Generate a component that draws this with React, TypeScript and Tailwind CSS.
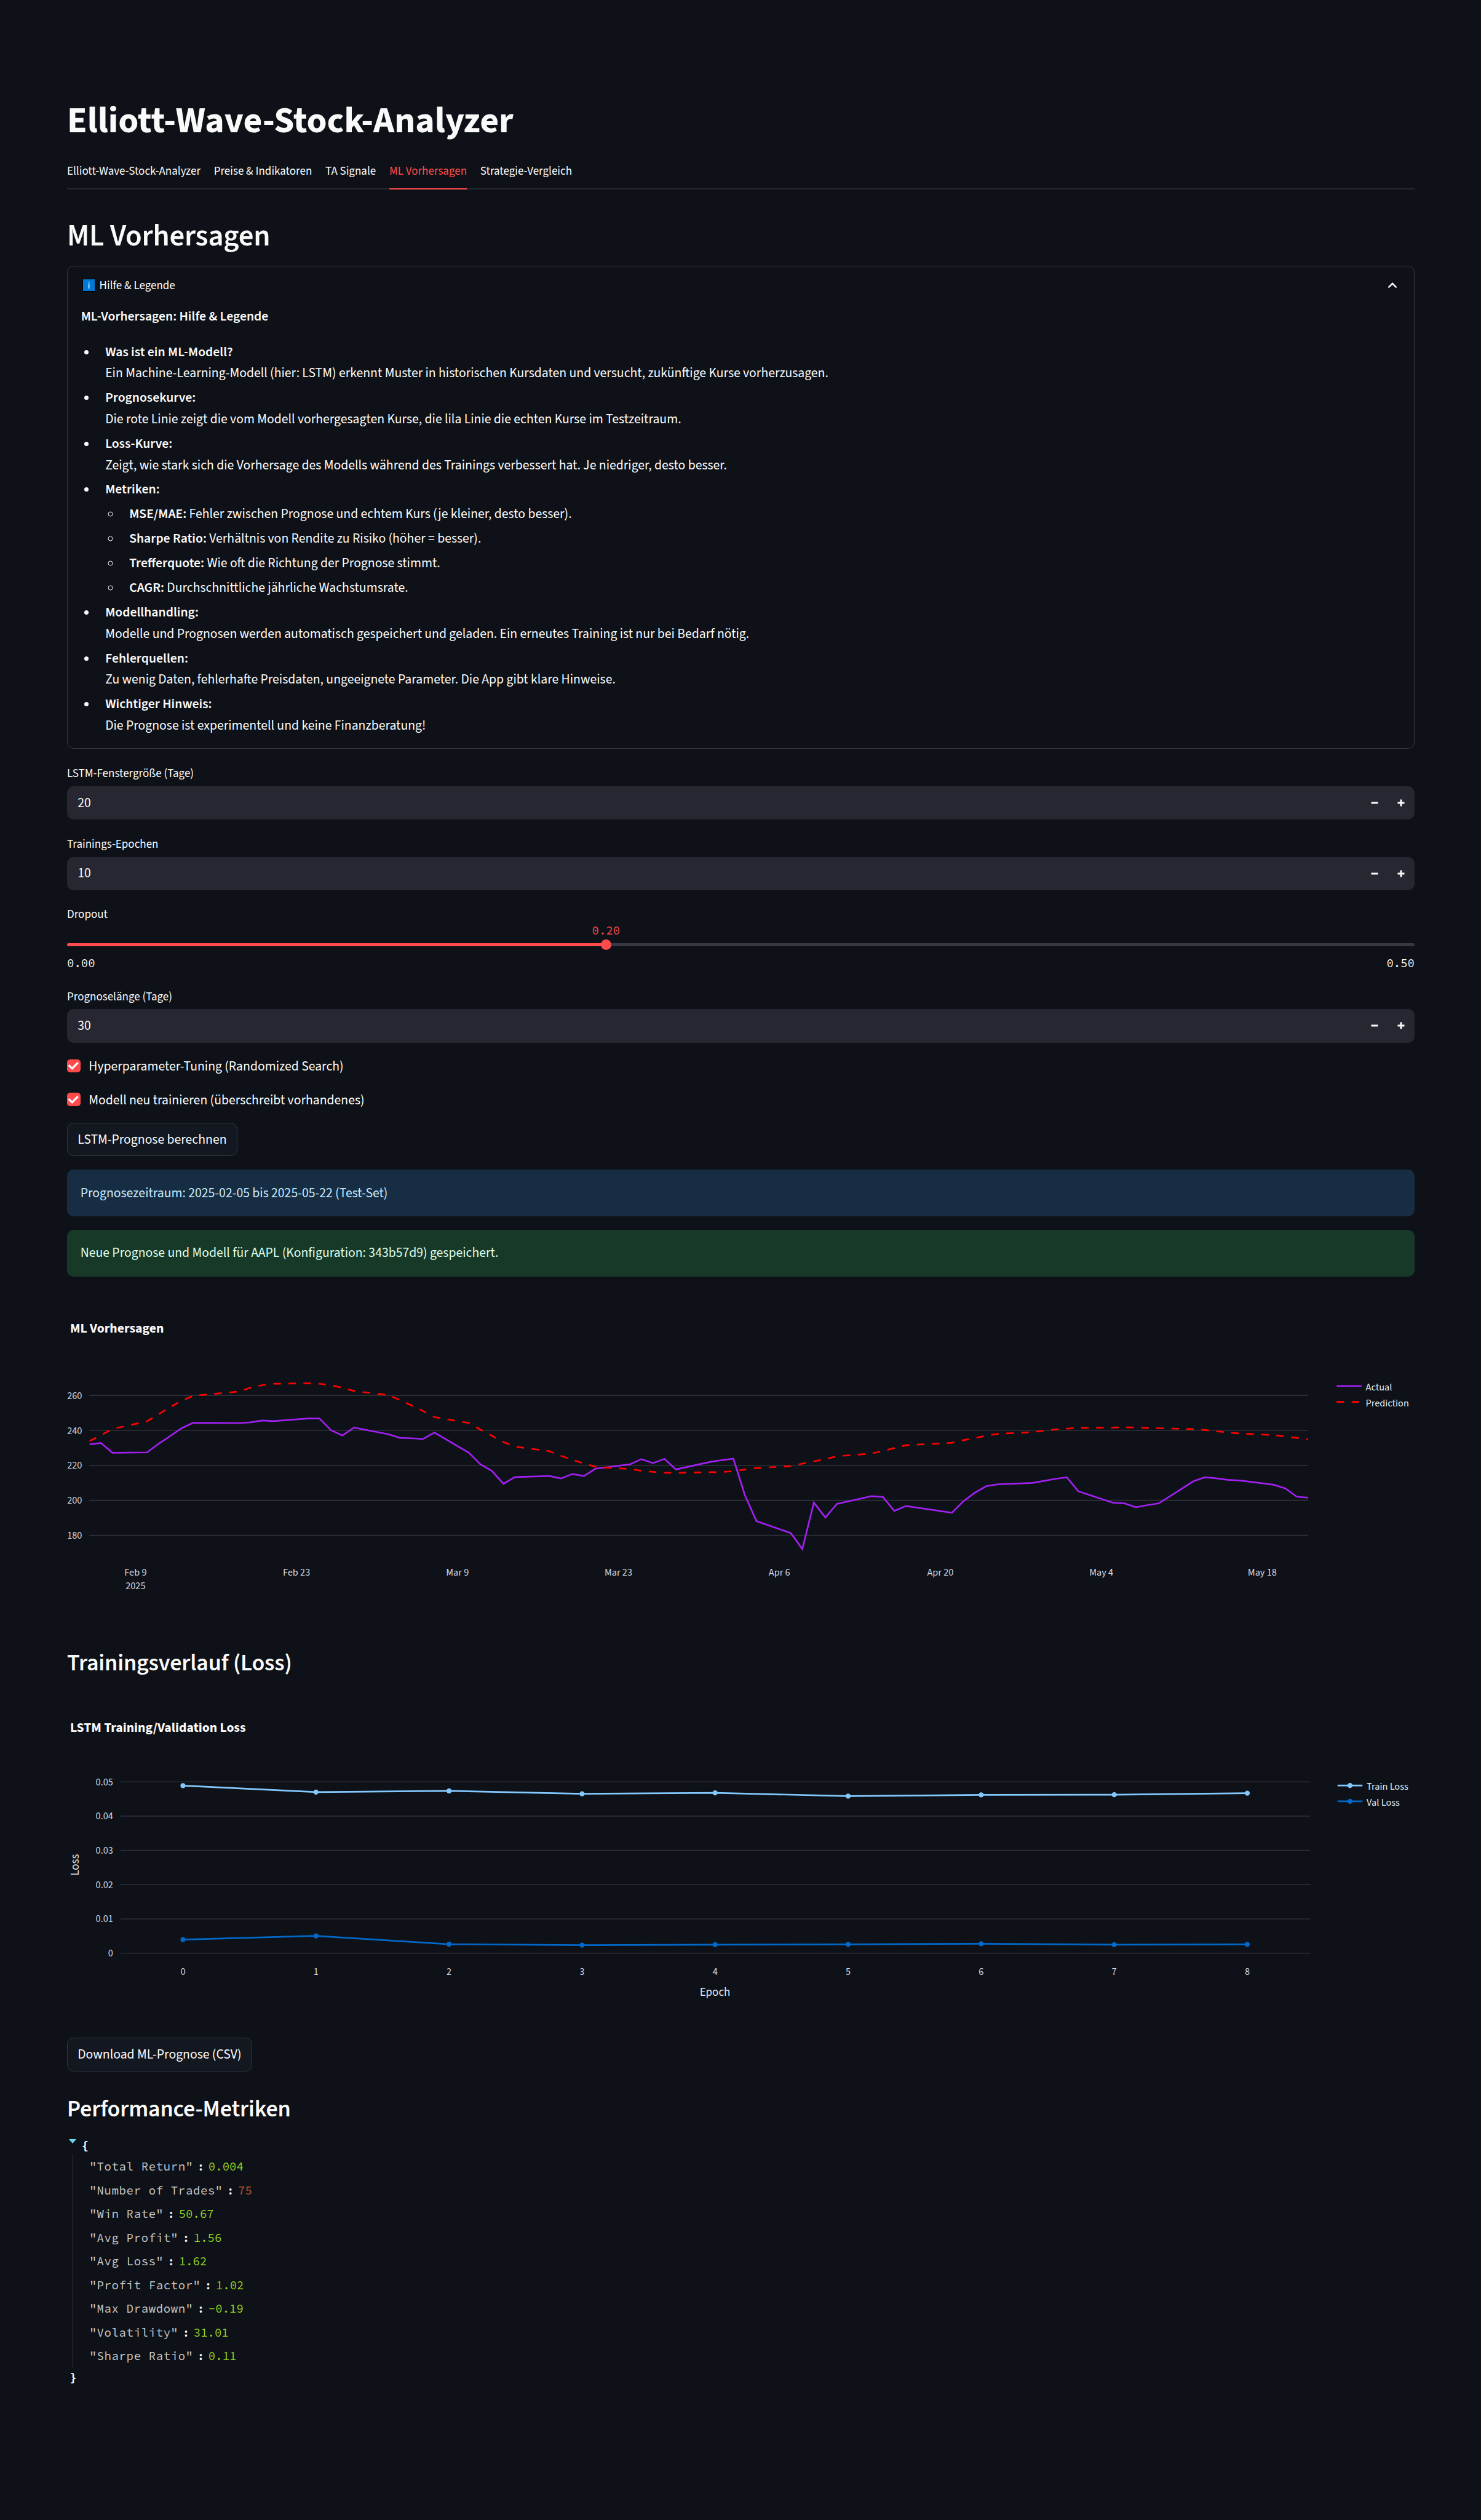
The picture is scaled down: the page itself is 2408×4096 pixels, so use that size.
import type { ReactNode } from "react";

const sans = "font-['Source_Sans_Pro','Source_Sans_3','Noto_Sans_CJK_SC',sans-serif]";
const mono = "font-['Source_Code_Pro','Liberation_Mono',monospace]";

const tabs = ["Elliott-Wave-Stock-Analyzer", "Preise & Indikatoren", "TA Signale", "ML Vorhersagen", "Strategie-Vergleich"];
const activeTab = "ML Vorhersagen";

type HelpItem = { title: string; text?: string; children?: { title: string; text: string }[] };

const help: HelpItem[] = [
  {
    title: "Was ist ein ML-Modell?",
    text: "Ein Machine-Learning-Modell (hier: LSTM) erkennt Muster in historischen Kursdaten und versucht, zukünftige Kurse vorherzusagen.",
  },
  {
    title: "Prognosekurve:",
    text: "Die rote Linie zeigt die vom Modell vorhergesagten Kurse, die lila Linie die echten Kurse im Testzeitraum.",
  },
  {
    title: "Loss-Kurve:",
    text: "Zeigt, wie stark sich die Vorhersage des Modells während des Trainings verbessert hat. Je niedriger, desto besser.",
  },
  {
    title: "Metriken:",
    children: [
      { title: "MSE/MAE:", text: "Fehler zwischen Prognose und echtem Kurs (je kleiner, desto besser)." },
      { title: "Sharpe Ratio:", text: "Verhältnis von Rendite zu Risiko (höher = besser)." },
      { title: "Trefferquote:", text: "Wie oft die Richtung der Prognose stimmt." },
      { title: "CAGR:", text: "Durchschnittliche jährliche Wachstumsrate." },
    ],
  },
  {
    title: "Modellhandling:",
    text: "Modelle und Prognosen werden automatisch gespeichert und geladen. Ein erneutes Training ist nur bei Bedarf nötig.",
  },
  {
    title: "Fehlerquellen:",
    text: "Zu wenig Daten, fehlerhafte Preisdaten, ungeeignete Parameter. Die App gibt klare Hinweise.",
  },
  { title: "Wichtiger Hinweis:", text: "Die Prognose ist experimentell und keine Finanzberatung!" },
];

// [days since Feb 5, actual close, predicted close]
const prices: [number, number, number][] = [
  [0, 232.0, 233.9], [1, 232.8, 237.3], [2, 227.2, 240.8], [5, 227.4, 245.2], [6, 232.3, 249.2], [7, 236.7, 253.2],
  [8, 241.2, 256.9], [9, 244.3, 259.7], [13, 244.2, 262.2], [14, 244.6, 264.4], [15, 245.6, 265.8], [16, 245.3, 266.6],
  [19, 246.8, 266.9], [20, 246.8, 266.6], [21, 240.1, 265.8], [22, 237.1, 264.3], [23, 241.6, 262.5], [26, 237.8, 260.2],
  [27, 235.7, 257.3], [28, 235.5, 254.3], [29, 235.1, 251.1], [30, 238.7, 247.6], [33, 227.2, 244.2], [34, 220.6, 240.4],
  [35, 216.8, 236.9], [36, 209.5, 233.4], [37, 213.3, 230.7], [40, 213.9, 228.1], [41, 212.5, 225.5], [42, 215.1, 223.2],
  [43, 213.9, 221.1], [44, 218.1, 219.2], [47, 220.6, 217.9], [48, 223.6, 216.9], [49, 221.3, 216.3], [50, 223.7, 215.8],
  [51, 217.7, 215.7], [54, 222.0, 216.1], [55, 223.0, 216.2], [56, 223.8, 216.7], [57, 203.0, 217.6], [58, 188.2, 218.5],
  [61, 181.3, 219.6], [62, 172.2, 221.0], [63, 198.7, 222.3], [64, 190.2, 223.6], [65, 198.0, 225.2], [68, 202.4, 226.8],
  [69, 202.0, 228.2], [70, 194.0, 229.9], [71, 196.8, 231.5], [75, 192.9, 232.9], [76, 199.5, 234.4], [77, 204.4, 235.6],
  [78, 208.2, 237.0], [79, 209.2, 238.0], [82, 210.0, 239.0], [83, 211.1, 239.8], [84, 212.3, 240.5], [85, 213.2, 241.0],
  [86, 205.2, 241.4], [89, 198.7, 241.6], [90, 198.3, 241.7], [91, 196.1, 241.7], [92, 197.3, 241.4], [93, 198.3, 241.2],
  [96, 210.9, 240.7], [97, 213.2, 240.2], [98, 212.6, 239.5], [99, 211.7, 238.8], [100, 211.4, 238.2], [103, 208.9, 237.3],
  [104, 206.9, 236.5], [105, 202.1, 235.7], [106, 201.5, 234.9],
];

const dayX = (d: number) => 47.9 + d * 24.47;
const priceY = (v: number) => 222.5 + (260 - v) * 3.725;
const dateTicks: [number, string][] = [
  [4, "Feb 9"], [18, "Feb 23"], [32, "Mar 9"], [46, "Mar 23"], [60, "Apr 6"], [74, "Apr 20"], [88, "May 4"], [102, "May 18"],
];

function PriceChart() {
  const line = (k: 1 | 2) => prices.map((p) => `${dayX(p[0]).toFixed(1)},${priceY(p[k]).toFixed(1)}`).join(" ");
  return (
    <svg viewBox="0 0 2868 712" className={`mt-[23px] block h-[544px] w-full ${sans}`} fontSize="21.3">
      <defs>
        <clipPath id="price-area">
          <rect x="47.5" y="120" width="2594" height="460" />
        </clipPath>
      </defs>
      <text x="6.5" y="88.7" fontSize="28.4" fontWeight="700" fill="#fafafa">ML Vorhersagen</text>
      {[260, 240, 220, 200, 180].map((v) => (
        <g key={v}>
          <line x1="47.5" x2="2641.5" y1={priceY(v)} y2={priceY(v)} stroke="#2c2e38" strokeWidth="2.4" />
          <text x="32" y={priceY(v) + 7.3} textAnchor="end" fill="#d3d7e0">{v}</text>
        </g>
      ))}
      {dateTicks.map(([d, label]) => (
        <text key={label} x={dayX(d)} y="606.6" textAnchor="middle" fill="#d3d7e0">{label}</text>
      ))}
      <text x={dayX(4)} y="634.8" textAnchor="middle" fill="#d3d7e0">2025</text>
      <g clipPath="url(#price-area)" fill="none" strokeWidth="3.55">
        <polyline points={line(1)} stroke="#a020f0" />
        <polyline points={line(2)} stroke="#ff0000" strokeDasharray="16 16" />
      </g>
      <line x1="2702" x2="2755" y1="202.5" y2="202.5" stroke="#a020f0" strokeWidth="3.55" />
      <text x="2764" y="211.5" fill="#e8eaef">Actual</text>
      <line x1="2702" x2="2755" y1="236.5" y2="236.5" stroke="#ff0000" strokeWidth="3.55" strokeDasharray="16 16" />
      <text x="2764" y="245.5" fill="#e8eaef">Prediction</text>
    </svg>
  );
}

const trainY = [203.3, 217, 214.6, 220.7, 218.7, 225.7, 223, 222.7, 219.3];
const valY = [531, 523, 540.6, 542.6, 541.6, 541, 539.7, 541.7, 541];
const lossTicks = ["0.05", "0.04", "0.03", "0.02", "0.01", "0"];
const epochX = (i: number) => 246.7 + i * 283.15;

function LossSeries({ ys, color }: { ys: number[]; color: string }) {
  return (
    <g>
      <polyline points={ys.map((y, i) => `${epochX(i)},${y}`).join(" ")} fill="none" stroke={color} strokeWidth="3.55" />
      {ys.map((y, i) => (
        <circle key={i} cx={epochX(i)} cy={y} r="5.4" fill={color} />
      ))}
    </g>
  );
}

function LossChart() {
  return (
    <svg viewBox="0 0 2868 712" className={`mt-[20.8px] block h-[544px] w-full ${sans}`} fontSize="21.3">
      <text x="6.5" y="89" fontSize="28.4" fontWeight="700" fill="#fafafa">LSTM Training/Validation Loss</text>
      {lossTicks.map((label, i) => (
        <g key={label}>
          <line x1="114" x2="2646" y1={195.2 + i * 72.95} y2={195.2 + i * 72.95} stroke="#2c2e38" strokeWidth="2" />
          <text x="98" y={202.3 + i * 72.95} textAnchor="end" fill="#d3d7e0">{label}</text>
        </g>
      ))}
      {trainY.map((_, i) => (
        <text key={i} x={epochX(i)} y="606" textAnchor="middle" fill="#d3d7e0">{i}</text>
      ))}
      <text x="1379" y="651" textAnchor="middle" fontSize="24.8" fill="#e0e3ea">Epoch</text>
      <text transform="translate(25.5 372) rotate(-90)" textAnchor="middle" fontSize="24.8" fill="#e0e3ea">Loss</text>
      <LossSeries ys={trainY} color="#83c9ff" />
      <LossSeries ys={valY} color="#0068c9" />
      <line x1="2704" x2="2757" y1="203" y2="203" stroke="#83c9ff" strokeWidth="3.55" />
      <circle cx="2730.5" cy="203" r="5.4" fill="#83c9ff" />
      <text x="2766" y="212" fill="#e8eaef">Train Loss</text>
      <line x1="2704" x2="2757" y1="236.7" y2="236.7" stroke="#0068c9" strokeWidth="3.55" />
      <circle cx="2730.5" cy="236.7" r="5.4" fill="#0068c9" />
      <text x="2766" y="246" fill="#e8eaef">Val Loss</text>
    </svg>
  );
}

function Label({ children }: { children: ReactNode }) {
  return <div className="mt-[22.4px] flex h-[33px] items-center pt-[2.5px] text-[19px] leading-[33px]">{children}</div>;
}

function NumberField({ label, value }: { label: string; value: number }) {
  return (
    <div>
      <Label>{label}</Label>
      <div className="mt-[5px] flex h-[54.3px] items-center rounded-[10.8px] bg-[#262730] pl-[17.2px] text-[21.7px]">
        <span className="flex-1 pt-[2px]">{value}</span>
        <span className="flex w-[43.6px] justify-center">
          <svg viewBox="0 0 12 12" className="size-[12px]"><path d="M0.5 6h11" stroke="#fafafa" strokeWidth="3" /></svg>
        </span>
        <span className="flex w-[43.6px] justify-center">
          <svg viewBox="0 0 12 12" className="size-[12px]"><path d="M0.5 6h11M6 0.5v11" stroke="#fafafa" strokeWidth="3" /></svg>
        </span>
      </div>
    </div>
  );
}

function Checkbox({ children }: { children: ReactNode }) {
  return (
    <div className="mt-[21.7px] flex h-[32.6px] items-center">
      <span className="flex size-[21.7px] items-center justify-center rounded-[5px] bg-[#ff4b4b]">
        <svg viewBox="0 0 17 13" className="w-[19px]">
          <path d="M6.5 12.6L.4 6.6l2.2-2.2 3.9 4L13.9.9 16 3z" fill="#fff" />
        </svg>
      </span>
      <span className="pt-[4px] pl-[13.6px] text-[21.7px] leading-[32.6px]">{children}</span>
    </div>
  );
}

function Button({ children, className }: { children: ReactNode; className: string }) {
  return (
    <button className={`flex h-[54.3px] items-center rounded-[10.8px] border border-[#34363e] bg-[#131720] px-[16.2px] pt-[2px] text-[21.7px] leading-[34.7px] ${className}`}>
      {children}
    </button>
  );
}

const metrics: [string, string, string][] = [
  ["Total Return", "0.004", "text-[#96d624]"],
  ["Number of Trades", "75", "text-[#b8592c]"],
  ["Win Rate", "50.67", "text-[#96d624]"],
  ["Avg Profit", "1.56", "text-[#96d624]"],
  ["Avg Loss", "1.62", "text-[#96d624]"],
  ["Profit Factor", "1.02", "text-[#96d624]"],
  ["Max Drawdown", "-0.19", "text-[#96d624]"],
  ["Volatility", "31.01", "text-[#96d624]"],
  ["Sharpe Ratio", "0.11", "text-[#96d624]"],
];

function JsonView() {
  return (
    <div className={`mt-[20.5px] text-[19px] ${mono}`}>
      <div className="flex h-[29px] items-start pl-[2.5px]">
        <svg viewBox="0 0 12 7" className="mt-[5px] h-[7px] w-[12px]"><path d="M0 0h12L6 7z" fill="#66d9ef" /></svg>
        <span className="pt-[1px] pl-[9.2px] leading-[29px] font-bold">{"{"}</span>
      </div>
      <div className="ml-[8px] border-l border-[#262726] pl-[27.4px]">
        {metrics.map(([key, value, color]) => (
          <div key={key} className="flex h-[38.55px] items-center pt-[1px]">
            <span className="tracking-[0.64px] whitespace-pre text-[#c9c9c8]">{`"${key}"`}</span>
            <span className="mr-[6.7px] ml-[6.8px] font-medium">:</span>
            <span className={color}>{value}</span>
          </div>
        ))}
      </div>
      <div className="h-[29px] pl-[4.2px] leading-[32px] font-bold">{"}"}</div>
    </div>
  );
}

export default function App() {
  return (
    <div className={`h-[4096px] w-[2408px] bg-[#0e1117] pt-[161px] pr-[108px] pl-[109px] text-[#fafafa] ${sans}`}>
      <h1 className="text-[59.7px] leading-[71.6px] font-bold">Elliott-Wave-Stock-Analyzer</h1>

      <nav className="mt-[17.9px] flex h-[57.5px] gap-[21.7px] border-b-2 border-[#262730]">
        {tabs.map((tab) => (
          <span
            key={tab}
            className={
              tab === activeTab
                ? "-mb-[2px] flex items-center border-b-2 border-[#ff4b4b] pt-[3px] text-[19px] text-[#ff4b4b]"
                : "flex items-center pt-[3px] text-[19px]"
            }
          >
            {tab}
          </span>
        ))}
      </nav>

      <h2 className="mt-[46.7px] text-[48.8px] leading-[58.6px] font-semibold tracking-[-0.005em]">ML Vorhersagen</h2>

      <section className="mt-[18.8px] h-[785.4px] rounded-[10.8px] border border-[#fafafa]/17 px-[21.7px]">
        <div className="flex h-[61px] items-center text-[19px]">
          <span className="ml-[2px] flex size-[21.4px] items-center justify-center border-[1.5px] border-black bg-[#0078d7] text-[16px] leading-none">
            i
          </span>
          <span className="flex-1 pt-[2.5px] pl-[6.5px]">Hilfe &amp; Legende</span>
          <svg viewBox="0 0 14 9" className="mr-[6.5px] h-[9px] w-[14px]">
            <path d="M1.2 7.6L7 1.8l5.8 5.8" fill="none" stroke="#fafafa" strokeWidth="2.4" strokeLinecap="round" />
          </svg>
        </div>
        <div className="mt-[4.4px] text-[21.7px] leading-[34.73px]">
          <p className="font-semibold">ML-Vorhersagen: Hilfe &amp; Legende</p>
          <ul className="mt-[22.4px] list-disc space-y-[5.16px]">
            {help.map((item) => (
              <li key={item.title} className="ml-[26.5px] pl-[13px]">
                <strong className="font-semibold">{item.title}</strong>
                {item.text && <div>{item.text}</div>}
                {item.children && (
                  <ul className="mt-[5.16px] list-[circle] space-y-[5.16px]">
                    {item.children.map((sub) => (
                      <li key={sub.title} className="ml-[26px] pl-[13px]">
                        <strong className="font-semibold">{sub.title}</strong> {sub.text}
                      </li>
                    ))}
                  </ul>
                )}
              </li>
            ))}
          </ul>
        </div>
      </section>

      <NumberField label="LSTM-Fenstergröße (Tage)" value={20} />
      <NumberField label="Trainings-Epochen" value={10} />

      <div>
        <Label>Dropout</Label>
        <div className={`text-[19px] ${mono}`}>
          <div className="flex h-[21px] w-4/5 items-center justify-center text-[#ff4b4b]">0.20</div>
          <div className="mt-[4px] flex h-[16.3px] items-center">
            <span className="h-[5.4px] w-2/5 rounded-l-full bg-[#ff4b4b]" />
            <span className="z-10 -mx-[8.15px] size-[16.3px] rounded-full bg-[#ff4b4b]" />
            <span className="h-[5.4px] flex-1 rounded-r-full bg-[#363742]" />
          </div>
          <div className="mt-[6.4px] flex h-[30px] items-center justify-between">
            <span>0.00</span>
            <span>0.50</span>
          </div>
        </div>
      </div>

      <NumberField label="Prognoselänge (Tage)" value={30} />

      <Checkbox>Hyperparameter-Tuning (Randomized Search)</Checkbox>
      <Checkbox>Modell neu trainieren (überschreibt vorhandenes)</Checkbox>

      <Button className="mt-[21.7px]">LSTM-Prognose berechnen</Button>

      <div className="mt-[21.7px] flex h-[76.1px] items-center rounded-[10.8px] bg-[#172d43] px-[21.7px] pt-[2px] text-[21.7px] text-[#c7ebff]">
        Prognosezeitraum: 2025-02-05 bis 2025-05-22 (Test-Set)
      </div>
      <div className="mt-[21.7px] flex h-[76.1px] items-center rounded-[10.8px] bg-[#173928] px-[21.7px] pt-[2px] text-[21.7px] text-[#dffde9]">
        Neue Prognose und Modell für AAPL (Konfiguration: 343b57d9) gespeichert.
      </div>

      <PriceChart />

      <h3 className="mt-[39.3px] text-[38px] leading-[45.6px] font-semibold tracking-[-0.005em]">Trainingsverlauf (Loss)</h3>
      <LossChart />

      <Button className="mt-[21.1px]">Download ML-Prognose (CSV)</Button>

      <h3 className="mt-[39.6px] text-[38px] leading-[45.6px] font-semibold tracking-[-0.005em]">Performance-Metriken</h3>
      <JsonView />
    </div>
  );
}
